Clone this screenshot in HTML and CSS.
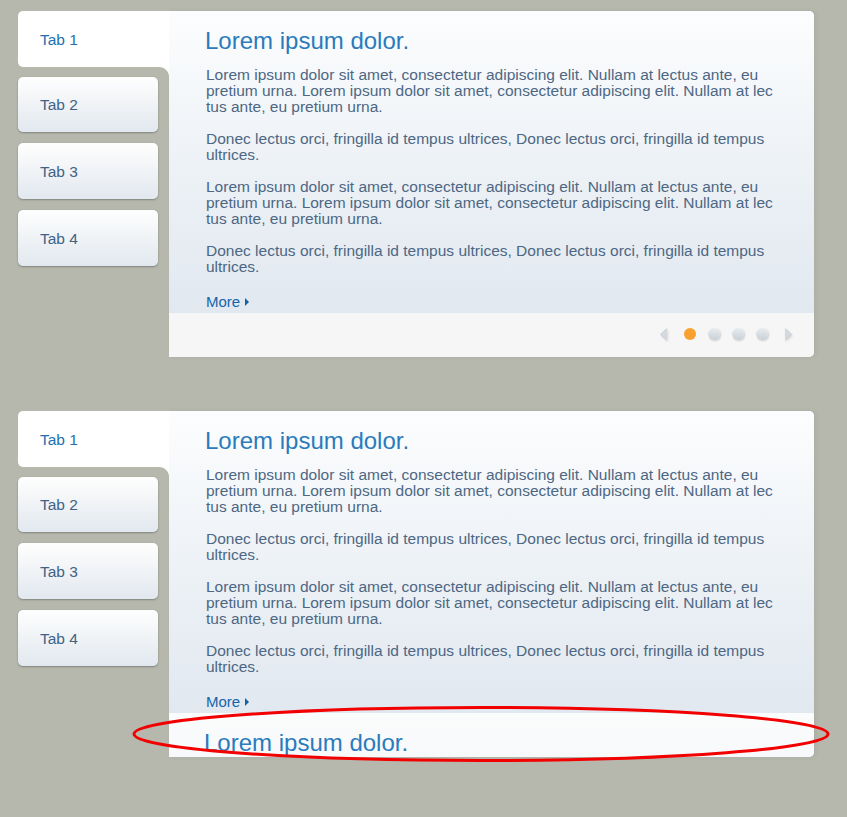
FILE: index.html
```html
<!DOCTYPE html>
<html>
<head>
<meta charset="utf-8">
<link rel="stylesheet" href="styles.css">
</head>
<body>
<div class="page">
  <div class="widget">
    <div class="tabs">
      <div class="tab active">Tab 1</div>
      <div class="tab">Tab 2</div>
      <div class="tab">Tab 3</div>
      <div class="tab">Tab 4</div>
    </div>
    <div class="panel">
      <div class="slide">
        <h2 class="title">Lorem ipsum dolor.</h2>
        <p class="para">Lorem ipsum dolor sit amet, consectetur adipiscing elit. Nullam at lectus ante, eu<br>pretium urna. Lorem ipsum dolor sit amet, consectetur adipiscing elit. Nullam at lec<br>tus ante, eu pretium urna.</p>
        <p class="para">Donec lectus orci, fringilla id tempus ultrices, Donec lectus orci, fringilla id tempus<br>ultrices.</p>
        <p class="para">Lorem ipsum dolor sit amet, consectetur adipiscing elit. Nullam at lectus ante, eu<br>pretium urna. Lorem ipsum dolor sit amet, consectetur adipiscing elit. Nullam at lec<br>tus ante, eu pretium urna.</p>
        <p class="para">Donec lectus orci, fringilla id tempus ultrices, Donec lectus orci, fringilla id tempus<br>ultrices.</p>
        <a class="more">More <span class="caret"></span></a>
      </div>
      <div class="footer">
        <svg class="arrow" width="8" height="13" viewBox="0 0 8 13"><path d="M7 0.5 L0.5 6.5 L7 12.5 Z" fill="#d3d9df"/><path d="M7 0.5 L0.5 6.5 L7 12.5" fill="none" stroke="#c3cad2" stroke-width="0.8"/></svg>
        <span class="dot on"></span>
        <span class="dot"></span>
        <span class="dot"></span>
        <span class="dot"></span>
        <svg class="arrow" width="8" height="13" viewBox="0 0 8 13"><path d="M1 0.5 L7.5 6.5 L1 12.5 Z" fill="#d3d9df"/><path d="M1 0.5 L7.5 6.5 L1 12.5" fill="none" stroke="#c3cad2" stroke-width="0.8"/></svg>
      </div>
    </div>
  </div>

  <div class="widget">
    <div class="tabs">
      <div class="tab active">Tab 1</div>
      <div class="tab">Tab 2</div>
      <div class="tab">Tab 3</div>
      <div class="tab">Tab 4</div>
    </div>
    <div class="panel clipped">
      <div class="slide">
        <h2 class="title">Lorem ipsum dolor.</h2>
        <p class="para">Lorem ipsum dolor sit amet, consectetur adipiscing elit. Nullam at lectus ante, eu<br>pretium urna. Lorem ipsum dolor sit amet, consectetur adipiscing elit. Nullam at lec<br>tus ante, eu pretium urna.</p>
        <p class="para">Donec lectus orci, fringilla id tempus ultrices, Donec lectus orci, fringilla id tempus<br>ultrices.</p>
        <p class="para">Lorem ipsum dolor sit amet, consectetur adipiscing elit. Nullam at lectus ante, eu<br>pretium urna. Lorem ipsum dolor sit amet, consectetur adipiscing elit. Nullam at lec<br>tus ante, eu pretium urna.</p>
        <p class="para">Donec lectus orci, fringilla id tempus ultrices, Donec lectus orci, fringilla id tempus<br>ultrices.</p>
        <a class="more">More <span class="caret"></span></a>
      </div>
      <div class="slide next">
        <h2 class="title">Lorem ipsum dolor.</h2>
      </div>
    </div>
  </div>

  <svg class="ring" width="700" height="60" viewBox="0 0 700 60"><ellipse cx="350" cy="29" rx="347" ry="26.5" fill="none" stroke="#f20000" stroke-width="3"/></svg>
</div>
</body>
</html>
```

FILE: styles.css
```css
html, body {
  margin: 0;
  padding: 0;
  background: #b6b8ae;
}
body {
  font-family: "Liberation Sans", Arial, sans-serif;
  width: 847px;
  height: 817px;
  overflow: hidden;
}
.page {
  position: relative;
  padding: 11px 0 0 18px;
}
.widget {
  display: flex;
  height: 346px;
  margin-bottom: 54px;
}
.tabs {
  width: 151px;
  flex: none;
  display: flex;
  flex-direction: column;
}
.tab {
  position: relative;
  width: 140px;
  height: 56px;
  margin-top: 11px;
  box-sizing: border-box;
  padding-left: 22px;
  padding-top: 1px;
  display: flex;
  align-items: center;
  font-size: 15.5px;
  color: #3e6385;
  border-radius: 5px;
  background: linear-gradient(to bottom, #fefefe 0%, #f0f3f6 50%, #e2e8ef 100%);
  box-shadow: 0 1px 2px rgba(0, 0, 0, 0.28), 0 0 1px rgba(0, 0, 0, 0.12);
}
.tab:nth-child(2) {
  height: 55px;
  margin-top: 10px;
}
.tab.active {
  width: 151px;
  height: 56px;
  margin-top: 0;
  background: #ffffff;
  color: #2170b1;
  border-radius: 5px 0 0 5px;
  box-shadow: none;
}
.tab.active::after {
  content: "";
  position: absolute;
  right: 0;
  top: 100%;
  width: 10px;
  height: 10px;
  background: radial-gradient(circle at 0 100%, rgba(255,255,255,0) 9.5px, #fdfdfe 10.5px);
}
.panel {
  width: 645px;
  height: 346px;
  display: flex;
  flex-direction: column;
  border-radius: 0 5px 5px 0;
  overflow: hidden;
  box-shadow: 2px 0 5px rgba(0, 0, 0, 0.06);
  background: #f6f6f6;
}
.slide {
  height: 302px;
  flex: none;
  box-sizing: border-box;
  padding: 16px 0 0 37px;
  background: linear-gradient(to bottom, #fcfdfe 0%, #eff3f7 45%, #e1e8f0 100%);
}
.slide.next {
  height: 60px;
  padding-left: 36px;
  border-radius: 0 4px 0 0;
  background: linear-gradient(to bottom, #fbfcfc 0%, #f5f7f9 100%);
}
.title {
  margin: 0 0 12px -1px;
  font-size: 24px;
  line-height: 28px;
  font-weight: normal;
  color: #2a7bbd;
}
.para {
  margin: 0 0 16px 0;
  font-size: 15.5px;
  line-height: 16px;
  color: #4d6783;
  white-space: nowrap;
}
.more {
  display: inline-block;
  margin-top: 3px;
  font-size: 15px;
  line-height: 16px;
  color: #1564a8;
}
.caret {
  display: inline-block;
  width: 0;
  height: 0;
  margin-left: 1px;
  border-left: 4px solid #1564a8;
  border-top: 4px solid transparent;
  border-bottom: 4px solid transparent;
  vertical-align: 1px;
}
.footer {
  flex: 1;
  display: flex;
  align-items: center;
  justify-content: flex-end;
  gap: 12px;
  padding: 0 22px 2px 0;
  background: #f6f6f6;
}
.arrow {
  filter: drop-shadow(1px 1px 1px rgba(0, 0, 0, 0.12));
}
.arrow:first-child {
  margin-right: 4px;
}
.arrow:last-child {
  margin-left: 4px;
}
.dot {
  width: 12px;
  height: 12px;
  border-radius: 50%;
  background: linear-gradient(to bottom, #e8ecef 0%, #c8d0d8 100%);
  box-shadow: 1px 1px 2px rgba(0, 0, 0, 0.18);
}
.dot.on {
  background: #f8a130;
  box-shadow: none;
}
.ring {
  position: absolute;
  left: 131px;
  top: 705px;
}
```
